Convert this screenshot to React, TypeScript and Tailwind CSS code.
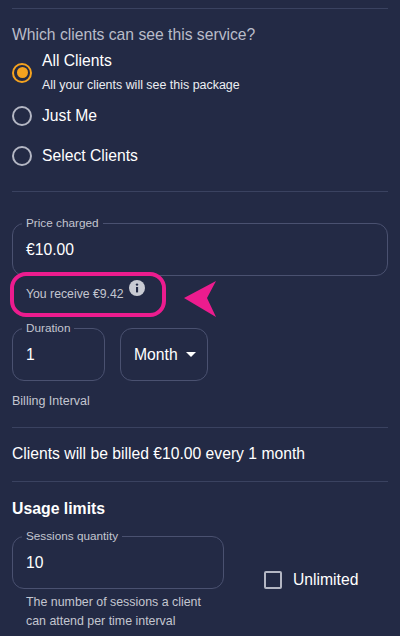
const font = { fontFamily: '"Liberation Sans", Arial, sans-serif' };

function Divider() {
  return <div className="h-px bg-[#3a4260]" />;
}

function Radio({ checked = false }: { checked?: boolean }) {
  return checked ? (
    <span className="flex h-5 w-5 shrink-0 items-center justify-center rounded-full border-2 border-[#f5a31f]">
      <span className="h-[11px] w-[11px] rounded-full bg-[#f5a31f]" />
    </span>
  ) : (
    <span className="h-5 w-5 shrink-0 rounded-full border-2 border-[#b4b7c4]" />
  );
}

function Field({ label, value, className }: { label: string; value: string; className: string }) {
  return (
    <fieldset className={`h-[60px] rounded-xl border border-[#4a5170] px-[9px] ${className}`}>
      <legend className="px-[4px] text-[11.75px] leading-[14px] text-[#c3c6d0]">{label}</legend>
      <div className="mt-[10px] pl-[4px] text-[15.7px] leading-5 text-white">{value}</div>
    </fieldset>
  );
}

export default function App() {
  return (
    <div style={font} className="relative h-[636px] w-[400px] overflow-hidden bg-[#232a45] px-3 pt-2 text-white">
      <Divider />
      <p className="mt-[16px] text-[15.7px] leading-5 text-[#b9bcc9]">Which clients can see this service?</p>
      <div className="mt-[6px] flex items-center gap-[10px]">
        <Radio checked />
        <div>
          <p className="text-[15.7px] leading-5">All Clients</p>
          <p className="mt-[5px] text-[12.45px] leading-[18px] text-[#eceef2]">All your clients will see this package</p>
        </div>
      </div>
      <div className="mt-[12px] flex h-5 items-center gap-[10px]">
        <Radio />
        <span className="text-[15.7px] leading-5">Just Me</span>
      </div>
      <div className="mt-[20px] flex h-5 items-center gap-[10px]">
        <Radio />
        <span className="text-[15.7px] leading-5">Select Clients</span>
      </div>
      <div className="mt-[25px]">
        <Divider />
      </div>
      <Field label="Price charged" value="€10.00" className="mt-[24px] w-[376px]" />
      <div className="mt-[6px] flex items-start pl-[14px]">
        <span className="mt-[3px] text-[12.25px] leading-[18px] text-[#c3c6d0]">You receive €9.42</span>
        <span className="ml-[5px] mt-[-2px] flex h-4 w-4 items-center justify-center rounded-full bg-[#c9cbd3]">
          <svg viewBox="0 0 16 16" className="h-4 w-4">
            <circle cx="8" cy="4.6" r="1.2" fill="#232a45" />
            <rect x="7" y="7" width="2.1" height="5.4" fill="#232a45" />
          </svg>
        </span>
      </div>
      <div className="mt-[18px] flex items-end gap-[15px]">
        <Field label="Duration" value="1" className="w-[93px]" />
        <div className="flex h-[53px] w-[88px] items-center rounded-xl border border-[#4a5170] pl-[13px]">
          <span className="text-[15.7px] leading-5">Month</span>
          <svg viewBox="0 0 10 5" className="ml-2 h-[5px] w-[10px]">
            <path d="M0 0h10L5 5z" fill="#fff" />
          </svg>
        </div>
      </div>
      <p className="mt-[11px] text-[12.5px] leading-[18px] text-[#c3c6d0]">Billing Interval</p>
      <div className="mt-[17px]">
        <Divider />
      </div>
      <p className="mt-[16px] text-[15.7px] leading-5">Clients will be billed €10.00 every 1 month</p>
      <div className="mt-[17px]">
        <Divider />
      </div>
      <p className="mt-[17px] text-[15.8px] font-bold leading-5">Usage limits</p>
      <div className="mt-[10px] flex gap-[40px]">
        <div className="w-[212px]">
          <Field label="Sessions quantity" value="10" className="w-[212px]" />
          <p className="mt-[4px] pl-[14px] text-[12.4px] leading-[19px] text-[#c3c6d0]">
            The number of sessions a client can attend per time interval
          </p>
        </div>
        <div className="mt-[41px] flex h-5 items-center gap-[11px]">
          <span className="h-[18px] w-[18px] rounded-[2px] border-2 border-[#b4b7c4]" />
          <span className="text-[15.7px] leading-5">Unlimited</span>
        </div>
      </div>
      <div className="absolute left-[10px] top-[272px] h-[45px] w-[156px] rounded-[16px] border-[4px] border-[#ec1c8e]" />
      <svg viewBox="0 0 32 36" className="absolute left-[184px] top-[281px] h-9 w-8">
        <path d="M0 17 32 0 23 17 32 36z" fill="#ec1c8e" />
      </svg>
    </div>
  );
}
